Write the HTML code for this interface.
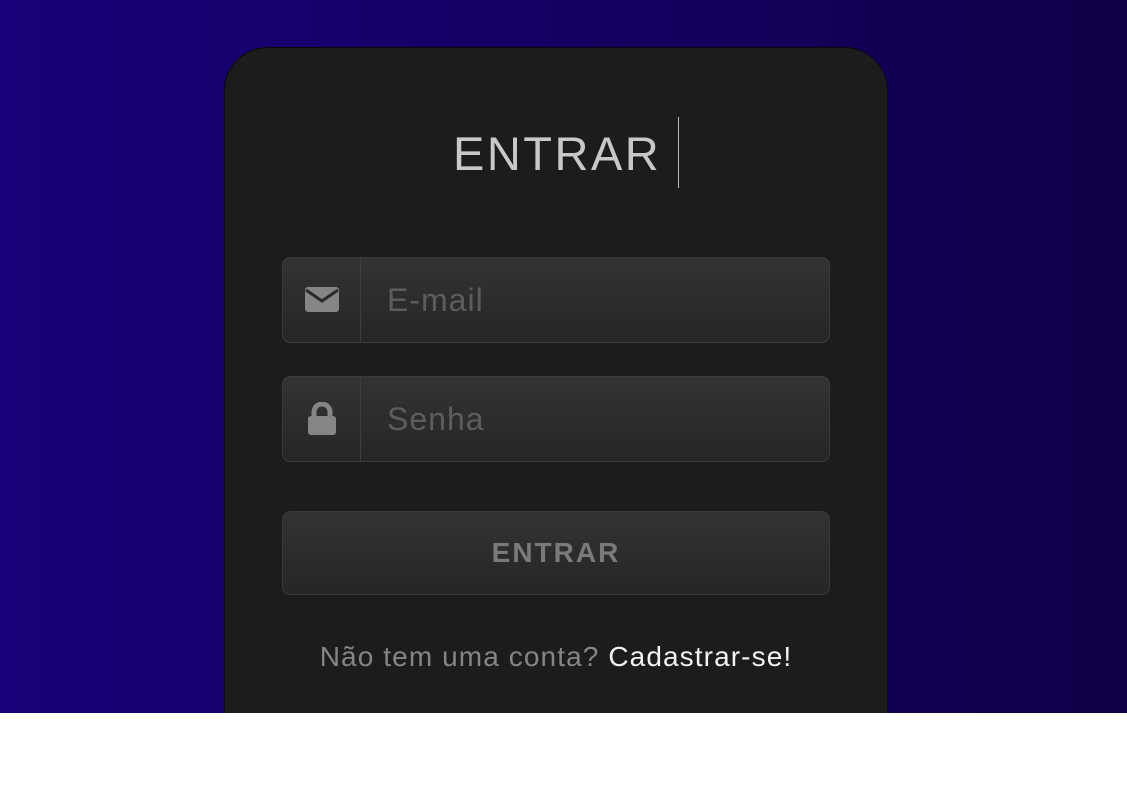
<!DOCTYPE html>
<html><head><style>
html,body{margin:0;padding:0;width:1127px;height:789px;background:#fff;overflow:hidden;font-family:"Liberation Sans",sans-serif}
.bg{position:absolute;left:0;top:0;width:1127px;height:713px;background:linear-gradient(90deg,#1a007a,#10004a);overflow:hidden}
.card{position:absolute;left:224px;top:47px;width:662px;height:720px;background:#1c1c1c;border:1px solid #0a0a0a;border-radius:44px}
.title{position:absolute;left:453px;top:126px;color:#c8c8c8;font-size:47px;letter-spacing:2.5px;line-height:56px;white-space:nowrap}
.cursor{position:absolute;left:678px;top:117px;width:1px;height:71px;background:#bbb}
.field{position:absolute;left:282px;width:546px;height:84px;border:1px solid #3a3a3a;border-radius:8px;background:linear-gradient(#333,#262626)}
.ic{position:absolute;left:0;top:0;width:77px;height:100%;border-right:1px solid #3e3e3e}
.ph{position:absolute;left:104px;top:0;line-height:84px;font-size:32px;letter-spacing:1px;color:#5d5d5d}
.btn{position:absolute;left:282px;top:511px;width:546px;height:82px;border:1px solid #3a3a3a;border-radius:8px;background:linear-gradient(#333,#262626);text-align:center;line-height:82px;color:#7a7a7a;font-size:28px;font-weight:bold;letter-spacing:2px}
.foot{position:absolute;left:0;width:1112px;top:641px;text-align:center;font-size:28px;letter-spacing:1.1px;color:#858585}
.foot span{color:#f2f2f2}
</style></head><body>
<div class="bg">
<div class="card"></div>
<div class="title">ENTRAR</div>
<div class="cursor"></div>
<div class="field" style="top:257px"><div class="ic">
<svg width="34" height="26" style="position:absolute;left:22px;top:29px" viewBox="0 0 34 26"><rect x="0" y="0" width="34" height="25" rx="3" fill="#858585"/><path d="M1 3 L17 14 L33 3" stroke="#2a2a2a" stroke-width="3" fill="none"/></svg>
</div><div class="ph">E-mail</div></div>
<div class="field" style="top:376px"><div class="ic">
<svg width="30" height="34" style="position:absolute;left:24px;top:25px" viewBox="0 0 30 34"><path d="M7 16 V10 A8 8 0 0 1 23 10 V16" stroke="#858585" stroke-width="5" fill="none"/><rect x="1" y="14" width="28" height="19" rx="3" fill="#858585"/></svg>
</div><div class="ph">Senha</div></div>
<div class="btn">ENTRAR</div>
<div class="foot">Não tem uma conta? <span>Cadastrar-se!</span></div>
</div>
</body></html>
